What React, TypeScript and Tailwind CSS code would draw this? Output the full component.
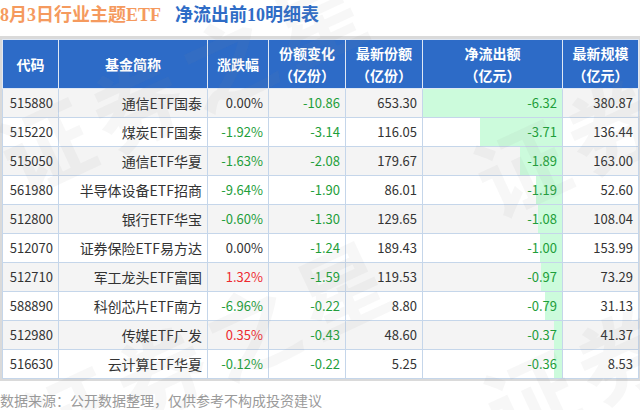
const rows = [
  ['515880', '通信ETF国泰', '0.00%', '-10.86', '653.30', -6.32, '380.87'],
  ['515220', '煤炭ETF国泰', '-1.92%', '-3.14', '116.05', -3.71, '136.44'],
  ['515050', '通信ETF华夏', '-1.63%', '-2.08', '179.67', -1.89, '163.00'],
  ['561980', '半导体设备ETF招商', '-9.64%', '-1.90', '86.01', -1.19, '52.60'],
  ['512800', '银行ETF华宝', '-0.60%', '-1.30', '129.65', -1.08, '108.04'],
  ['512070', '证券保险ETF易方达', '0.00%', '-1.24', '189.43', -1.0, '153.99'],
  ['512710', '军工龙头ETF富国', '1.32%', '-1.59', '119.53', -0.97, '73.29'],
  ['588890', '科创芯片ETF南方', '-6.96%', '-0.22', '8.80', -0.79, '31.13'],
  ['512980', '传媒ETF广发', '0.35%', '-0.43', '48.60', -0.37, '41.37'],
  ['516630', '云计算ETF华夏', '-0.12%', '-0.22', '5.25', -0.36, '8.53'],
] as const;

const maxFlow = 6.32;

function changeColor(v: string) {
  const n = parseFloat(v);
  if (n > 0) return 'text-[#ee2a2f]';
  if (n < 0) return 'text-[#1e9e3a]';
  return 'text-[#333]';
}

// faint diagonal watermark over the table
function Watermark({ className }: { className: string }) {
  return (
    <div
      className={`absolute origin-[0_50%] -rotate-[25deg] whitespace-nowrap text-[90px] leading-[90px] font-bold tracking-[10px] text-[#888]/[0.07] ${className}`}
    >
      证券之星
    </div>
  );
}

export default function App() {
  const th = 'border border-[#dfe8f5] bg-[#2d6bc7] text-white font-bold text-[14px] leading-[22px] text-center';
  const td = 'border border-[#c5d6ea] px-[5px] text-right text-[13px]';

  return (
    <div className="relative w-[640px] h-[410px] overflow-hidden bg-white font-['Noto_Sans_CJK_SC',sans-serif]">
      <div className="h-[36px] flex items-center pb-[6px] text-[18px] font-bold leading-none">
        <span className="text-[#f59a5e] font-['Liberation_Serif','Noto_Sans_CJK_SC',serif]">8月3日行业主题ETF</span>
        <span className="ml-[14px] text-[#2f6cc6] font-['Liberation_Serif','Noto_Sans_CJK_SC',serif]">净流出前10明细表</span>
      </div>

      <div className="border-2 border-t-[3px] border-[#dadada]">
        <table className="w-full border-collapse table-fixed">
          <colgroup>
            <col className="w-[56px]" />
            <col className="w-[149px]" />
            <col className="w-[61px]" />
            <col className="w-[77px]" />
            <col className="w-[77px]" />
            <col className="w-[140px]" />
            <col className="w-[76px]" />
          </colgroup>
          <thead>
            <tr className="h-[49px]">
              <th className={th}>代码</th>
              <th className={th}>基金简称</th>
              <th className={th}>涨跌幅</th>
              <th className={th}>份额变化<br />（亿份）</th>
              <th className={th}>最新份额<br />（亿份）</th>
              <th className={th}>净流出额<br />（亿元）</th>
              <th className={th}>最新规模<br />（亿元）</th>
            </tr>
          </thead>
          <tbody>
            {rows.map((r, i) => (
              <tr key={r[0]} className={`h-[29px] ${i % 2 === 0 ? 'bg-[#f4f4f4]' : 'bg-white'}`}>
                <td className={`${td} text-[#333]`}>{r[0]}</td>
                <td className={`${td} text-[#333] text-[14px]`}>{r[1]}</td>
                <td className={`${td} ${changeColor(r[2])}`}>{r[2]}</td>
                <td className={`${td} text-[#1e9e3a]`}>{r[3]}</td>
                <td className={`${td} text-[#333]`}>{r[4]}</td>
                <td className={`${td} relative text-[#1e9e3a]`}>
                  <div
                    className="absolute inset-y-0 right-0 bg-[#ccfbdc]"
                    style={{ width: `${(Math.abs(r[5]) / maxFlow) * 100}%` }}
                  />
                  <span className="relative">{r[5].toFixed(2)}</span>
                </td>
                <td className={`${td} text-[#333]`}>{r[6]}</td>
              </tr>
            ))}
          </tbody>
        </table>
      </div>

      <div className="mt-[9px] h-[20px] text-[14px] leading-[20px] text-[#9a9a9a]">
        数据来源：公开数据整理，仅供参考不构成投资建议
      </div>

      <div className="pointer-events-none absolute inset-0">
        <Watermark className="left-[4px] top-[117px]" />
        <Watermark className="left-[479px] top-[139px]" />
        <Watermark className="left-[28px] top-[386px]" />
        <Watermark className="left-[489px] top-[369px]" />
      </div>
    </div>
  );
}
